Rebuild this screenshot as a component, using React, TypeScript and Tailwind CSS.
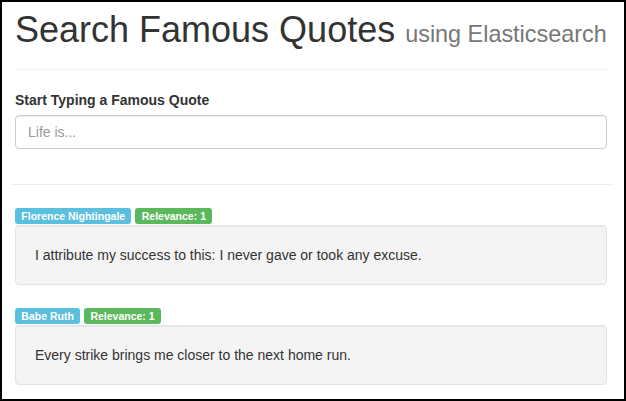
const quotes = [
  { author: 'Florence Nightingale', relevance: 1, text: 'I attribute my success to this: I never gave or took any excuse.' },
  { author: 'Babe Ruth', relevance: 1, text: 'Every strike brings me closer to the next home run.' },
];

export default function App() {
  return (
    <div className="w-[626px] h-[401px] border-2 border-black bg-white overflow-hidden text-[14px] leading-[20px] text-[#333] font-[family-name:'Liberation_Sans',Arial,sans-serif]">
      <div className="px-[10px]">
        <div className="pl-[3px] pr-[7px] pb-[15px]">
          {/* Header */}
          <div className="pt-[8px] pb-[9px] mb-[20px] border-b border-[#eee]">
            <h1 className="text-[36px] leading-[39.6px] mb-[10px] text-[#333]">
              Search Famous Quotes <small className="text-[23.4px] leading-none text-[#777]">using Elasticsearch</small>
            </h1>
          </div>

          {/* Search */}
          <div>
            <label className="block font-bold mb-[5px]">Start Typing a Famous Quote</label>
            <input
              type="text"
              placeholder="Life is..."
              className="block w-full h-[34px] px-[12px] py-[6px] border border-[#ccc] rounded-[4px] text-[14px] text-[#555] placeholder:text-[#999] shadow-[inset_0_1px_1px_rgba(0,0,0,0.075)] outline-none"
            />
          </div>
        </div>

        <hr className="mt-[20px] mb-[20px] border-0 border-t border-[#eee]" />

        <div className="pl-[3px] pr-[7px]">
          {quotes.map((q) => (
            <div key={q.author}>
              <div className="flex items-end gap-[4px] h-[20px] pb-[1px]">
                <span className="inline-block h-[16px] px-[6.3px] pt-[2px] rounded-[3px] bg-[#5bc0de] text-white text-[10.5px] leading-[12px] font-bold">
                  {q.author}
                </span>
                <span className="inline-block h-[16px] px-[6.3px] pt-[2px] rounded-[3px] bg-[#5cb85c] text-white text-[10.5px] leading-[12px] font-bold">
                  Relevance: {q.relevance}
                </span>
              </div>
              <div className="mb-[20px] p-[19px] bg-[#f4f4f4] border border-[#e3e3e3] rounded-[4px] shadow-[inset_0_1px_1px_rgba(0,0,0,0.05)]">
                {q.text}
              </div>
            </div>
          ))}
        </div>
      </div>
    </div>
  );
}
